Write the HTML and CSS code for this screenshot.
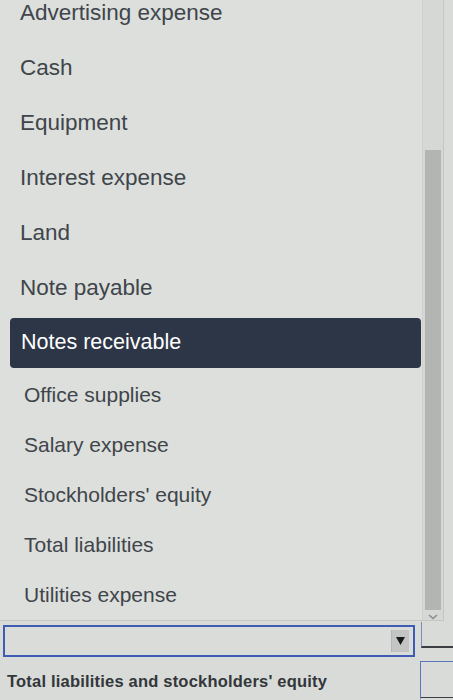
FILE: index.html
```html
<!DOCTYPE html>
<html>
<head>
<meta charset="utf-8">
<link rel="stylesheet" href="styles.css">
</head>
<body>
<div class="page">
  <div class="dropdown">
    <ul class="list">
      <li class="item big">Advertising expense</li>
      <li class="item big">Cash</li>
      <li class="item big">Equipment</li>
      <li class="item big">Interest expense</li>
      <li class="item big">Land</li>
      <li class="item big">Note payable</li>
      <li class="item big selected"><span class="hl">Notes receivable</span></li>
      <li class="item small">Office supplies</li>
      <li class="item small">Salary expense</li>
      <li class="item small">Stockholders' equity</li>
      <li class="item small">Total liabilities</li>
      <li class="item small">Utilities expense</li>
    </ul>
    <div class="scrollbar">
      <div class="track-top"></div>
      <div class="thumb"></div>
      <div class="down">
        <svg width="10" height="6" viewBox="0 0 10 6"><path d="M1 1 L5 4.5 L9 1" fill="none" stroke="#8a8d90" stroke-width="1.6"/></svg>
      </div>
    </div>
  </div>
  <div class="row">
    <div class="select">
      <div class="arrow-btn">
        <svg width="9" height="8" viewBox="0 0 9 8"><path d="M0 0 H9 L4.5 8 Z" fill="#1a1a1a"/></svg>
      </div>
    </div>
    <div class="side-box one"></div>
  </div>
  <div class="row total">
    <div class="label">Total liabilities and stockholders' equity</div>
    <div class="side-box two"></div>
  </div>
</div>
</body>
</html>
```
FILE: styles.css
```css
html, body {
  margin: 0;
  padding: 0;
  background: #d8dbd7;
  overflow: hidden;
}
.page {
  width: 453px;
  height: 700px;
  overflow: hidden;
  font-family: "Liberation Sans", Arial, sans-serif;
  color: #40454b;
}
.dropdown {
  display: flex;
  width: 444px;
  margin-top: -15px;
  background: #dcdfdb;
  border-right: 1px solid #c4c7c4;
  border-bottom: 1px solid #c4c7c4;
  box-sizing: border-box;
}
.list {
  list-style: none;
  margin: 0;
  padding: 0;
  flex: 1;
}
.item {
  display: flex;
  align-items: center;
  padding-left: 20px;
  box-sizing: border-box;
}
.item.big {
  height: 55px;
  font-size: 22.5px;
}
.item.small {
  height: 50px;
  font-size: 21px;
  padding-left: 24px;
}
.item.selected {
  padding: 2.5px 0 2.5px 10px;
}
.hl {
  display: flex;
  align-items: center;
  width: calc(100% - 1px);
  height: 50px;
  background: #2d3647;
  color: #ffffff;
  border-radius: 4px;
  padding-left: 11px;
  box-sizing: border-box;
  font-size: 21.5px;
}
.scrollbar {
  width: 20px;
  display: flex;
  flex-direction: column;
  background: #d6d8d5;
  border-left: 1px solid #cfd1ce;
}
.track-top {
  height: 165px;
}
.thumb {
  height: 460px;
  background: #b3b5b3;
  margin: 0 2px;
}
.down {
  flex: 1;
  display: flex;
  justify-content: center;
  align-items: center;
  padding-top: 4px;
}
.row {
  display: flex;
  align-items: flex-start;
}
.select {
  width: 412px;
  height: 32px;
  margin: 4px 0 0 3px;
  border: 2px solid #3e5cb4;
  box-sizing: border-box;
  background: #dadcd9;
  display: flex;
  justify-content: flex-end;
  align-items: center;
  padding-right: 4px;
}
.arrow-btn {
  width: 17px;
  height: 22px;
  background: #c3c5c4;
  border-left: 1px solid #b4b6b5;
  display: flex;
  justify-content: center;
  align-items: center;
}
.side-box {
  flex: 1;
  margin-left: 6px;
  box-sizing: border-box;
  border: 1px solid #5d76b8;
  border-right: none;
}
.side-box.one {
  height: 26px;
  margin-top: 1px;
  border-top: none;
  border-left: 1px solid #7a8cbd;
  border-bottom: 2px solid #3b3f44;
}
.total {
  margin-top: 4px;
  align-items: center;
}
.label {
  width: 414px;
  padding-left: 7px;
  box-sizing: border-box;
  font-weight: bold;
  font-size: 16.5px;
  letter-spacing: 0.2px;
  color: #33363b;
  padding-top: 0;
}
.side-box.two {
  height: 40px;
  border-bottom: 4px double #3b3f44;
}
```
